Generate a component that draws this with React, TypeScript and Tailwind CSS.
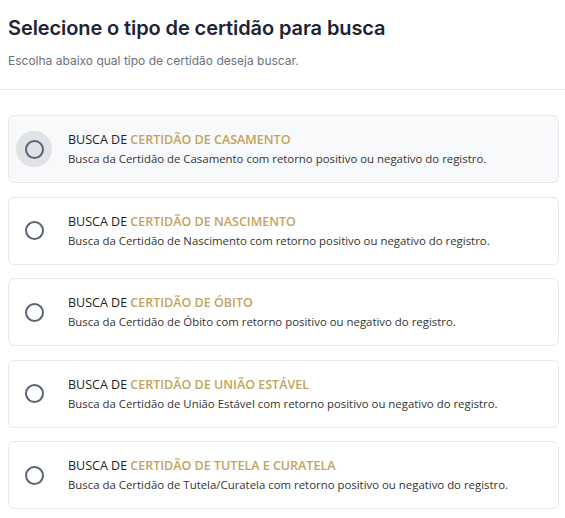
import { useState } from "react";

const tipos = [
  { nome: "CERTIDÃO DE CASAMENTO", desc: "Busca da Certidão de Casamento com retorno positivo ou negativo do registro." },
  { nome: "CERTIDÃO DE NASCIMENTO", desc: "Busca da Certidão de Nascimento com retorno positivo ou negativo do registro." },
  { nome: "CERTIDÃO DE ÓBITO", desc: "Busca da Certidão de Óbito com retorno positivo ou negativo do registro." },
  { nome: "CERTIDÃO DE UNIÃO ESTÁVEL", desc: "Busca da Certidão de União Estável com retorno positivo ou negativo do registro." },
  { nome: "CERTIDÃO DE TUTELA E CURATELA", desc: "Busca da Certidão de Tutela/Curatela com retorno positivo ou negativo do registro." },
];

export default function App() {
  const [hover, setHover] = useState(0);

  return (
    <div className="bg-white min-h-[518px] pl-2 pr-[6px] pt-[14px]" style={{ fontFamily: "Inter, sans-serif" }}>
      <h1 className="text-[20px] font-semibold text-[#1e2433] leading-7 tracking-[-0.1px]">
        Selecione o tipo de certidão para busca
      </h1>
      <p className="text-[12px] text-[#6b7280] mt-[9px] leading-5">
        Escolha abaixo qual tipo de certidão deseja buscar.
      </p>
      <div className="border-t border-[#e5e7eb] mt-[18px] -ml-2 -mr-[6px]" />

      <div className="flex flex-col gap-[13.5px] mt-[25px]" style={{ fontFamily: "'Open Sans', sans-serif" }}>
        {tipos.map((t, i) => (
          <label
            key={t.nome}
            onMouseEnter={() => setHover(i)}
            className={`flex items-center h-[68px] rounded-[6px] border border-[#e6e8eb] cursor-pointer ${
              hover === i ? "bg-[#f8f9fb]" : "bg-white"
            }`}
          >
            <div className="w-[50px] mr-[9px] flex justify-center items-center shrink-0">
              <span
                className={`w-9 h-9 rounded-full flex items-center justify-center ${
                  hover === i ? "bg-[#e1e2e5]" : ""
                }`}
              >
                <span className="w-[19px] h-[19px] rounded-full border-2 border-[#586476]" />
              </span>
            </div>
            <div className="flex flex-col">
              <span className="text-[12.5px] text-[#222222] leading-[18px]">
                BUSCA DE <span className="font-semibold text-[#c3a35c]">{t.nome}</span>
              </span>
              <span className="text-[11.4px] text-[#333333] leading-4 mt-[2px]">{t.desc}</span>
            </div>
          </label>
        ))}
      </div>
    </div>
  );
}
